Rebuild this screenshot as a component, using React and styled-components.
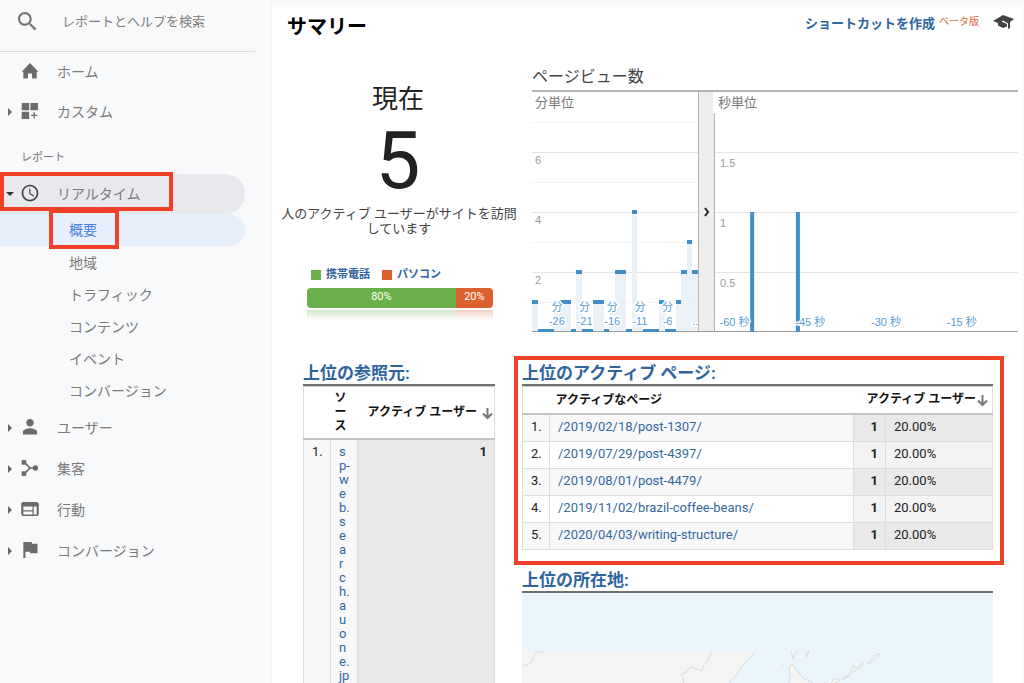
import React from "react";
import styled, { createGlobalStyle, css } from "styled-components";

const Global = createGlobalStyle`
  *, *::before, *::after { box-sizing: border-box; }
  html, body { margin: 0; height: 100%; }
  body {
    overflow: hidden;
    background: #f8f9fb;
    color: #222;
    font-family: Roboto, "Noto Sans CJK JP", sans-serif;
    font-size: 13px;
  }
  a { color: inherit; text-decoration: none; }
  h1, h2, p, ul { margin: 0; padding: 0; }
  ul { list-style: none; }
`;

const Page = styled.div`
  display: flex;
  height: 100vh;
  overflow: hidden;
`;

/* ---------- sidebar ---------- */

const Sidebar = styled.nav`
  flex: 0 0 272px;
  border-right: 1px solid #f3f4f6;
  color: #757575;
`;

const SearchBar = styled.label`
  display: flex;
  align-items: center;
  gap: 24px;
  height: 52px;
  margin-right: 16px;
  padding: 0 0 8px 17px;
  border-bottom: 1px solid #dcdcdd;
`;

const SearchInput = styled.input`
  flex: 1;
  min-width: 0;
  padding: 0;
  border: 0;
  outline: 0;
  background: transparent;
  font: inherit;
  &::placeholder { color: #808080; opacity: 1; }
`;

const NavItem = styled.a`
  display: flex;
  align-items: center;
  height: ${(p) => p.$h || 40}px;
  margin-right: 26px;
  padding-left: 4px;
  padding-bottom: ${(p) => (p.$open ? 2 : 0)}px;
  border-radius: 0 20px 20px 0;
  font-size: 14px;
  color: #7a7a7a;
  background: ${(p) => (p.$open ? "#e8e9ec" : "transparent")};
`;

const Caret = styled.span`
  flex: 0 0 12px;
  height: 12px;
`;

const NavIcon = styled.span`
  display: flex;
  flex: 0 0 20px;
  margin: 0 17px 0 4px;
  color: ${(p) => (p.$dark ? "#444" : "#6b6b6b")};
`;

const SectionLabel = styled.p`
  padding: 16px 0 6px 21px;
  font-size: 11px;
  line-height: 20px;
`;

const SubItem = styled.a`
  display: flex;
  align-items: center;
  height: 32px;
  margin-right: 26px;
  padding-left: 69px;
  padding-bottom: ${(p) => (p.$active ? 2 : 0)}px;
  border-radius: 0 16px 16px 0;
  font-size: 14px;
  color: ${(p) => (p.$active ? "#4a7fdc" : "#7a7a7a")};
  background: ${(p) => (p.$active ? "#e7effc" : "transparent")};
`;

const Marked = styled.div`
  position: relative;
  &::after {
    content: "";
    position: absolute;
    border: 4px solid #ee4128;
    pointer-events: none;
    ${(p) => p.$box}
  }
`;

const realtimeBox = css`top: -2px; left: 0; width: 173px; height: 39px; z-index: 1;`;
const overviewBox = css`top: -5px; left: 49px; width: 70px; height: 40px; z-index: 1;`;
const pagesBox = css`inset: -6px -11px -15px -8px;`;

/* ---------- main ---------- */

const Main = styled.main`
  flex: 1;
  min-width: 0;
  margin: 7px 1px 0 0;
  background: #fff;
`;

const Header = styled.header`
  display: flex;
  justify-content: space-between;
  align-items: flex-start;
  height: 60px;
  padding: 4px 8px 0 15px;
`;

const Title = styled.h1`
  font-size: 20px;
  line-height: 32px;
  color: #000;
`;

const HeaderActions = styled.div`
  display: flex;
  align-items: center;
  gap: 4px;
  height: 22px;
`;

const Shortcut = styled.a`
  font-weight: 700;
  color: #2e659f;
`;

const Beta = styled.span`
  margin-right: 10px;
  font-size: 10px;
  line-height: 16px;
  color: #e0683f;
`;

const Columns = styled.div`
  display: flex;
  height: 285px;
`;

const Current = styled.section`
  flex: 0 0 252px;
  padding: 12px 0 0 0;
  text-align: center;
`;

const Now = styled.p`
  font-size: 26px;
  line-height: 41px;
`;

const Count = styled.p`
  padding-top: 1px;
  font-size: 80px;
  line-height: 80px;
`;

const Caption = styled.p`
  padding: 5px 3px 0 5px;
  line-height: 15px;
  color: #444;
`;

const Legend = styled.ul`
  display: flex;
  gap: 12px;
  padding: 31px 0 0 39px;
  font-size: 11px;
  font-weight: 700;
  line-height: 16px;
  color: #2e659f;
`;

const LegendItem = styled.li`
  display: flex;
  align-items: center;
  gap: 5px;
  &::before {
    content: "";
    width: 10px;
    height: 10px;
    background: ${(p) => p.$color};
  }
`;

const DeviceBar = styled.div`
  display: flex;
  height: 20px;
  margin: 5px 31px 0 35px;
  border-radius: 4px;
  overflow: hidden;
`;

const Share = styled.span`
  flex: ${(p) => p.$value};
  font-size: 11px;
  line-height: 18px;
  color: #fff;
  background: ${(p) => p.$color};
`;

const Reflection = styled.div`
  height: 10px;
  margin: 2px 31px 0 35px;
  opacity: 0.3;
  background: linear-gradient(to right, #6ab04a 80%, #dd6031 80%);
  mask-image: linear-gradient(#000, transparent);
`;

const Views = styled.section`
  flex: 1;
  min-width: 0;
  padding: 0 5px 0 8px;
`;

const ViewsTitle = styled.h2`
  font-size: 16px;
  font-weight: 400;
  line-height: 20px;
  padding-bottom: 3px;
  color: #444;
`;

const Charts = styled.div`
  display: flex;
  height: 242px;
  border-top: 2px solid #b4b4b4;
  border-bottom: 1px solid #9a9a9a;
`;

const MinutePane = styled.div`
  flex: 0 0 166px;
`;

const SecondPane = styled.div`
  flex: 1;
  min-width: 0;
`;

const Toggle = styled.button`
  display: flex;
  flex: 0 0 17px;
  align-items: center;
  justify-content: center;
  padding: 0;
  border: 0;
  border-left: 1px solid #b5b5b5;
  border-right: 1px solid #b5b5b5;
  background: #ededed;
`;

const Chart = styled.svg`
  display: block;
  width: 100%;
  height: 239px;
  overflow: visible;
  font-family: "Liberation Sans", "Noto Sans CJK JP", sans-serif;
  font-size: 11px;
  .unit { font-size: 13px; fill: #777; }
  .y { fill: #999; }
  .x { fill: #559cd0; stroke: #fff; stroke-width: 3px; paint-order: stroke; }
  .mid { text-anchor: middle; }
`;

const Reports = styled.div`
  display: flex;
  align-items: flex-start;
  gap: 27px;
  padding: 10px 30px 0 31px;
`;

const Referrals = styled.section`
  flex: 0 0 192px;
`;

const Right = styled.div`
  flex: 1;
  min-width: 0;
`;

const ReportTitle = styled.h2`
  font-size: 17px;
  font-weight: 700;
  line-height: 22px;
  color: #2e659f;
  border-bottom: 2px solid #707070;
`;

const Table = styled.table`
  width: 100%;
  border-collapse: collapse;
  table-layout: fixed;
  line-height: 14px;
  border: 1px solid #ddd;
  border-top-color: #ccc;
`;

const Th = styled.th`
  padding: ${(p) => (p.$tight ? "4px 0 5px" : "5px 3px 6px 6px")};
  font-size: 12px;
  text-align: ${(p) => p.$align || "left"};
  white-space: ${(p) => (p.$wrap ? "normal" : "nowrap")};
  word-break: ${(p) => (p.$wrap ? "break-all" : "normal")};
  color: #111;
  border-bottom: 2px solid #c4c4c4;
  svg { margin-left: ${(p) => (p.$tight ? 4 : 0)}px; vertical-align: -4px; }
`;

const Narrow = styled.span`
  display: block;
  width: 14px;
  margin-left: 4px;
`;

const Td = styled.td`
  padding: 5px 7px 7px 8px;
  vertical-align: top;
  border: 1px solid #ddd;
  text-align: ${(p) => p.$align || "left"};
  font-weight: ${(p) => (p.$bold ? 700 : 400)};
  word-break: ${(p) => (p.$break ? "break-all" : "normal")};
  background: ${(p) => (p.$metric ? "#f3f3f3" : "#fff")};
  tr:nth-child(odd) > & { background: ${(p) => (p.$metric ? "#e9e9e9" : "#f8f8f8")}; }
  a { color: #33699f; }
`;

const Map = styled.svg`
  display: block;
  width: 100%;
  height: 200px;
  background: #eaf5fc;
`;

const MapSection = styled.section`
  padding-top: 19px;
`;

/* ---------- icons ---------- */

const Icon = ({ size = 20, children }) => (
  <svg width={size} height={size} viewBox="0 0 24 24" fill="currentColor" aria-hidden="true">{children}</svg>
);

const icons = {
  home: <path d="M9.500 21v-6h5v6H20v-8h2L12 2.500 2 13h2v8z" />,
  custom: <path d="M2 2.500h9V11H2zM12.500 2.500h9V11h-9zM2 13h9v8.500H2zM16.200 13.500h1.600v3h3v1.600h-3v3h-1.600v-3h-3v-1.600h3z" />,
  clock: <path d="M11.990 2C6.470 2 2 6.480 2 12s4.470 10 9.990 10C17.520 22 22 17.520 22 12S17.520 2 11.990 2zM12 20c-4.420 0-8-3.580-8-8s3.580-8 8-8 8 3.580 8 8-3.580 8-8 8zm.5-13H11v6l5.250 3.150.75-1.230-4.500-2.670z" />,
  user: <path d="M12 11.500c2.500 0 4.500-2 4.500-4.500S14.500 2.500 12 2.500 7.500 4.500 7.500 7s2 4.500 4.500 4.500zm0 2c-3 0-8.500 1.500-8.500 4.500v3h17v-3c0-3-5.500-4.500-8.500-4.500z" />,
  merge: (
    <g>
      <path d="M5 5l7 7-7 7M12 12h8" fill="none" stroke="currentColor" strokeWidth="2" />
      <rect x="2" y="2.500" width="5.500" height="5.500" />
      <rect x="2" y="16" width="5.500" height="5.500" />
      <circle cx="18.500" cy="12" r="3.200" />
    </g>
  ),
  web: <path d="M20 3.500H4c-1.300 0-2.500 1-2.500 2.500v12c0 1.500 1.200 2.500 2.500 2.500h16c1.300 0 2.500-1 2.500-2.500V6c0-1.500-1.200-2.500-2.500-2.500zM15 18.500H4V15h11v3.500zm0-5H4V9h11v4.500zm5 5h-3.500V9H20v9.500z" />,
  flag: <path d="M14.500 4.500L14 2.500H4V21.500h2.500v-7.500h5.500l.5 2H21V4.500z" />,
};

const Arrow = () => (
  <svg width="13" height="14" viewBox="0 0 13 14" fill="none" stroke="#777" strokeWidth="2" aria-hidden="true">
    <path d="M6.500 2v10M2 7.500l4.500 4.500 4.500-4.500" />
  </svg>
);

const CaretMark = ({ open }) => (
  <svg width="12" height="12" viewBox="0 0 12 12" fill={open ? "#333" : "#666"} aria-hidden="true">
    <path d={open ? "M2 4h8L6 8z" : "M4 2v8l4-4z"} />
  </svg>
);

/* ---------- data ---------- */

const minutes = [1, 0, 0, 0, 1, 1, 1, 0, 2, 0, 0, 1, 1, 0, 1, 2, 2, 0, 4, 1, 0, 0, 0, 1, 0, 0, 1, 2, 3, 2];
const minuteLabels = [-26, -21, -16, -11, -6];
const subItems = ["地域", "トラフィック", "コンテンツ", "イベント", "コンバージョン"];
const lowerNav = [["user", "ユーザー"], ["merge", "集客"], ["web", "行動"], ["flag", "コンバージョン"]];
const pages = [
  "/2019/02/18/post-1307/",
  "/2019/07/29/post-4397/",
  "/2019/08/01/post-4479/",
  "/2019/11/02/brazil-coffee-beans/",
  "/2020/04/03/writing-structure/",
];

function Entry({ icon, label, caret = true, open, h }) {
  return (
    <NavItem href="#" $open={open} $h={h}>
      <Caret>{caret && <CaretMark open={open} />}</Caret>
      <NavIcon $dark={open}><Icon>{icons[icon]}</Icon></NavIcon>
      {label}
    </NavItem>
  );
}

function MinuteChart() {
  const slot = 100 / 30;
  return (
    <Chart role="img" aria-label="分単位">
      {[1, 2, 3, 4, 5, 6, 7].map((v) => (
        <rect key={v} width="100%" height="1" y={240 - v * 30} fill={v % 2 ? "#f3f3f3" : "#e4e4e4"} />
      ))}
      {minutes.map((v, i) => (
        <g key={i} shapeRendering="crispEdges">
          {v > 0 && <rect x={`${i * slot}%`} width={`${slot}%`} y={240 - v * 30} height={v * 30 - 1} fill="#eaf2f8" />}
          <rect x={`${i * slot}%`} width={`${slot}%`} y={v ? 238 - v * 30 : 237} height={v ? 4 : 3} fill="#3f8fc6" />
        </g>
      ))}
      <text className="unit" x="3" y="15">分単位</text>
      {[2, 4, 6].map((v) => <text key={v} className="y" x="3" y={252 - v * 30}>{v}</text>)}
      {minuteLabels.map((m) => (
        <g key={m}>
          <text className="x mid" x={`${(30.500 + m) * slot}%`} y="219">分</text>
          <text className="x mid" x={`${(30.500 + m) * slot}%`} y="233">{m}</text>
        </g>
      ))}
      <text className="x" x="160" y="233">..</text>
    </Chart>
  );
}

function SecondChart() {
  return (
    <Chart role="img" aria-label="秒単位">
      {[1, 2, 3].map((v) => <rect key={v} width="100%" height="1" y={240 - v * 60} fill="#e4e4e4" />)}
      <rect x="-2" width="60" height="21" fill="#fff" />
      <text className="unit" x="3" y="15">秒単位</text>
      {["0.5", "1", "1.5"].map((v, i) => <text key={v} className="y" x="5" y={195 - i * 60}>{v}</text>)}
      {[11.600, 26.700].map((x) => (
        <rect key={x} x={`${x}%`} y="120" width="4" height="120" fill="#3f8fc6" />
      ))}
      {[-60, -45, -30, -15].map((s, i) => (
        <text key={s} className="x" x={`${1.500 + i * 25}%`} y="234">{s} 秒</text>
      ))}
    </Chart>
  );
}

export default function App() {
  return (
    <Page>
      <Global />
      <Sidebar>
        <SearchBar>
          <svg width="21" height="21" viewBox="2 2 20 20" fill="#757575" aria-hidden="true">
            <path d="M15.500 14h-.79l-.28-.27C15.410 12.590 16 11.110 16 9.500 16 5.910 13.090 3 9.500 3S3 5.910 3 9.500 5.910 16 9.500 16c1.610 0 3.090-.59 4.230-1.570l.27.28v.79l5 4.990L20.490 19l-4.990-5zm-6 0C7.010 14 5 11.990 5 9.500S7.010 5 9.500 5 14 7.010 14 9.500 11.990 14 9.500 14z" />
          </svg>
          <SearchInput aria-label="検索" placeholder="レポートとヘルプを検索" />
        </SearchBar>
        <Entry icon="home" label="ホーム" caret={false} h={38} />
        <Entry icon="custom" label="カスタム" h={42} />
        <SectionLabel>レポート</SectionLabel>
        <Marked $box={realtimeBox}><Entry icon="clock" label="リアルタイム" open /></Marked>
        <Marked $box={overviewBox}><SubItem href="#" $active>概要</SubItem></Marked>
        {subItems.map((s) => <SubItem key={s} href="#">{s}</SubItem>)}
        {lowerNav.map(([icon, label]) => <Entry key={icon} icon={icon} label={label} h={41} />)}
      </Sidebar>

      <Main>
        <Header>
          <Title>サマリー</Title>
          <HeaderActions>
            <Shortcut href="#">ショートカットを作成</Shortcut>
            <Beta>ベータ版</Beta>
            <svg width="22" height="16" viewBox="0 0 22 16" fill="#444" aria-hidden="true">
              <path d="M0 7L10 1l11 4-4 3v6l-2 1V9.500L10 6.500 8.500 7.500 14 10v2.500L10 14 5 11.500V9z" />
            </svg>
          </HeaderActions>
        </Header>

        <Columns>
          <Current>
            <Now>現在</Now>
            <Count>5</Count>
            <Caption>人のアクティブ ユーザーがサイトを訪問しています</Caption>
            <Legend>
              <LegendItem $color="#6ab04a">携帯電話</LegendItem>
              <LegendItem $color="#dd6031">パソコン</LegendItem>
            </Legend>
            <DeviceBar>
              <Share $value={4} $color="#6ab04a">80%</Share>
              <Share $value={1} $color="#dd6031">20%</Share>
            </DeviceBar>
            <Reflection />
          </Current>
          <Views>
            <ViewsTitle>ページビュー数</ViewsTitle>
            <Charts>
              <MinutePane><MinuteChart /></MinutePane>
              <Toggle aria-label="切り替え">
                <svg width="6" height="10" viewBox="0 0 6 10" fill="none" stroke="#222" strokeWidth="2">
                  <path d="M1 1l3 4-3 4" />
                </svg>
              </Toggle>
              <SecondPane><SecondChart /></SecondPane>
            </Charts>
          </Views>
        </Columns>

        <Reports>
          <Referrals>
            <ReportTitle>上位の参照元:</ReportTitle>
            <Table>
              <colgroup><col style={{ width: 27 }} /><col style={{ width: 27 }} /><col /></colgroup>
              <thead>
                <tr>
                  <Th />
                  <Th $wrap $tight><Narrow>ソース</Narrow></Th>
                  <Th $tight $align="right">アクティブ ユーザー<Arrow /></Th>
                </tr>
              </thead>
              <tbody>
                <tr>
                  <Td>1.</Td>
                  <Td $break><a href="#">sp-web.search.auone.jp</a></Td>
                  <Td $metric $bold $align="right">1</Td>
                </tr>
              </tbody>
            </Table>
          </Referrals>
          <Right>
            <Marked as="section" $box={pagesBox}>
              <ReportTitle>上位のアクティブ ページ:</ReportTitle>
              <Table>
                <colgroup><col style={{ width: 27 }} /><col /><col style={{ width: 32 }} /><col style={{ width: 107 }} /></colgroup>
                <thead>
                  <tr><Th /><Th>アクティブなページ</Th><Th colSpan="2" $align="right">アクティブ ユーザー<Arrow /></Th></tr>
                </thead>
                <tbody>
                  {pages.map((p, i) => (
                    <tr key={p}>
                      <Td>{i + 1}.</Td>
                      <Td><a href="#">{p}</a></Td>
                      <Td $metric $bold $align="right">1</Td>
                      <Td $metric>20.00%</Td>
                    </tr>
                  ))}
                </tbody>
              </Table>
            </Marked>
            <MapSection>
              <ReportTitle>上位の所在地:</ReportTitle>
              <Map viewBox="0 0 471 200" preserveAspectRatio="xMinYMin slice" role="img" aria-label="地図">
                <path fill="#f4f4f4" d="M0 58H233L228 65 218 76 213 84 207 90 200 100H0z" />
                <g fill="none" stroke="#dcdcdc">
                  <path d="M0 73l5-1 5-3 1-5 4-5 7 0 1-1" />
                  <path d="M190 58l-1 3-3 5-2 4-3 3-1 5-11-4-4 5-6 2 2 3 1 10" />
                  <path d="M233 58L228 65 218 76 213 84 207 90 200 100" />
                </g>
                <g fill="#f4f4f4" stroke="#dcdcdc">
                  <path d="M269 58l2 8 4-8M284 58l1 6 2-6" />
                  <path d="M260 72l1 2M263 76l1 1M302 90l3-2" />
                  <path d="M267 100V90l1-8-1-8 3-3 4 5 7 9 10 5 10 10z" />
                  <path d="M308 92l4-7 6 2-6 4zM320 86l5-3 5-6 1-5 4 3 6-5-1 4-8 4-5 5-6 3zM345 71l7-8 7-3-6 6-5 4z" />
                </g>
              </Map>
            </MapSection>
          </Right>
        </Reports>
      </Main>
    </Page>
  );
}
